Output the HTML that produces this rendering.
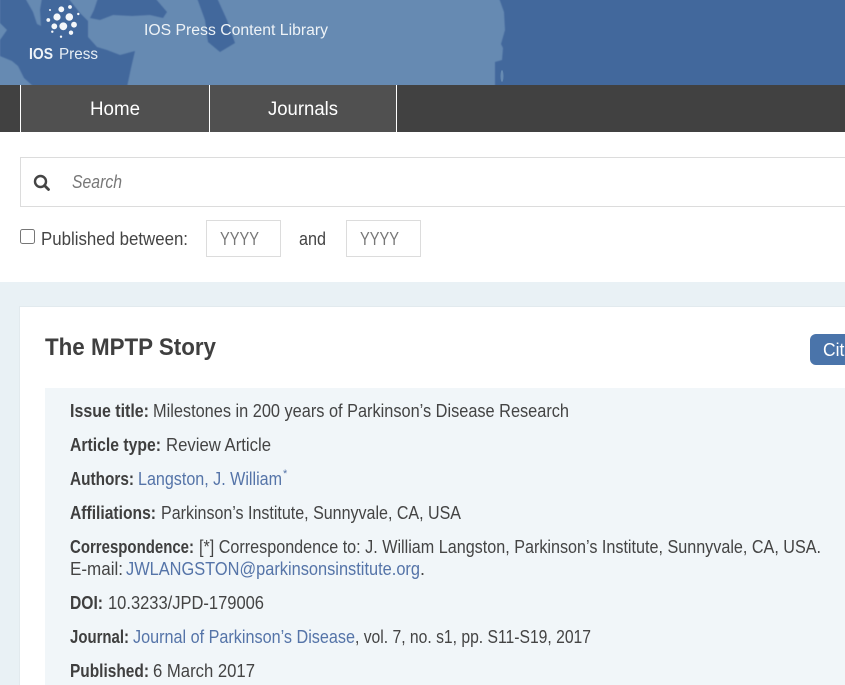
<!DOCTYPE html>
<html lang="en">
<head>
<meta charset="utf-8">
<title>The MPTP Story</title>
<style>
html,body{margin:0;padding:0;width:845px;height:685px;overflow:hidden;background:#fff}
svg{display:block;position:absolute;left:0;top:0}
text{font-family:"Liberation Sans",Arial,sans-serif;font-size:18px;fill:#444}
.b{font-weight:bold;fill:#3f3f3f}
.l{fill:#5574a8}
.cb{position:absolute;left:20px;top:229px;width:15px;height:15px;margin:0}
</style>
</head>
<body>
<svg width="845" height="685" viewBox="0 0 845 685" xmlns="http://www.w3.org/2000/svg">
<defs><filter id="s" x="-5%" y="-5%" width="110%" height="110%"><feGaussianBlur stdDeviation="0.5"/></filter></defs>
<!-- header map -->
<rect width="845" height="85" fill="#668ab2"/>
<g fill="#42689c" filter="url(#s)">
<path d="M0,-2 L25,-2 L33,12 L37,24 L41,26 L40,10 L42,-2 L68,-2 L80,13 L88,21 L88,37 L97,47 L107,50 L120,55 L135,51 L131,68 L127,87 L34,87 L24,78 L18,66 L12,61 L0,56 L0,40 L7,30 L3,26 L0,23 Z"/>
<path d="M98,-2 L155,-2 L167,12 L163,18 L150,15 L132,16 L113,15 L100,20 L90,18 L94,10 Z"/>
<path d="M197,-2 L217,-2 L227,20 L235,43 L220,52 L208,42 L205,20 Z"/>
<path d="M499,-2 L847,-2 L847,87 L495,87 L495,62 L502,60 L503,48 L501,44 L505,30 L504,12 Z"/>
</g>
<ellipse cx="502" cy="76" rx="1.5" ry="6" fill="#668ab2"/>
<!-- logo dots -->
<g fill="#f4f7fa">
<circle cx="61.3" cy="9.3" r="2.9"/><circle cx="70" cy="7" r="1.9"/><circle cx="50" cy="10" r="1"/>
<circle cx="78.3" cy="14" r="1.2"/><circle cx="57" cy="17" r="3.6"/><circle cx="69.3" cy="17" r="3.8"/>
<circle cx="48.3" cy="20" r="1.9"/><circle cx="74" cy="24.7" r="2.9"/><circle cx="63.3" cy="26.3" r="3.9"/>
<circle cx="54.3" cy="26.3" r="2.9"/><circle cx="52.3" cy="31.7" r="1.2"/><circle cx="71" cy="32.7" r="2.2"/>
<circle cx="61" cy="36.7" r="1.2"/>
</g>
<text x="29" y="59" class="b" style="fill:#f0f4f8;font-size:16px" textLength="24" lengthAdjust="spacingAndGlyphs">IOS</text>
<text x="59" y="59" style="fill:#e8eff5;font-size:16px" textLength="39" lengthAdjust="spacingAndGlyphs">Press</text>
<text x="144" y="35" style="fill:#eef3f7;font-size:15.5px" textLength="184" lengthAdjust="spacingAndGlyphs">IOS Press Content Library</text>
<!-- nav -->
<rect y="85" width="845" height="47" fill="#414141"/>
<rect x="20" y="85" width="377" height="47" fill="#505050"/>
<rect x="20" y="85" width="1" height="47" fill="#fff"/>
<rect x="209" y="85" width="1" height="47" fill="#fff"/>
<rect x="396" y="85" width="1" height="47" fill="#fff"/>
<text x="90" y="115" style="fill:#fff;font-size:19px" textLength="50" lengthAdjust="spacingAndGlyphs">Home</text>
<text x="268" y="115" style="fill:#fff;font-size:19px" textLength="70" lengthAdjust="spacingAndGlyphs">Journals</text>
<!-- search -->
<rect x="20.5" y="157.5" width="840" height="49" fill="#fff" stroke="#dcdcdc"/>
<circle cx="40.5" cy="181.5" r="5.5" fill="none" stroke="#444" stroke-width="2.4"/>
<path d="M44.5,185.5 L48.5,189.5" stroke="#444" stroke-width="2.8" stroke-linecap="round"/>
<text x="72" y="188" style="fill:#777;font-style:italic" textLength="50" lengthAdjust="spacingAndGlyphs">Search</text>
<text x="41" y="245" textLength="147" lengthAdjust="spacingAndGlyphs">Published between:</text>
<rect x="206.5" y="220.5" width="74" height="36" fill="#fff" stroke="#dcdcdc"/>
<text x="220" y="245" style="fill:#777" textLength="39" lengthAdjust="spacingAndGlyphs">YYYY</text>
<text x="299" y="245" textLength="27" lengthAdjust="spacingAndGlyphs">and</text>
<rect x="346.5" y="220.5" width="74" height="36" fill="#fff" stroke="#dcdcdc"/>
<text x="360" y="245" style="fill:#777" textLength="39" lengthAdjust="spacingAndGlyphs">YYYY</text>
<!-- main -->
<rect y="282" width="845" height="403" fill="#e9f1f5"/>
<rect x="19" y="306" width="830" height="380" fill="#e2eaee"/>
<rect x="20" y="307" width="830" height="380" fill="#fff"/>
<text x="45" y="355" class="b" style="font-size:24px" textLength="171" lengthAdjust="spacingAndGlyphs">The MPTP Story</text>
<rect x="810" y="334" width="60" height="31" rx="6" fill="#4a74aa"/>
<text x="823" y="356" style="fill:#fff;font-size:18px" textLength="31" lengthAdjust="spacingAndGlyphs">Cite</text>
<rect x="45" y="388" width="810" height="300" fill="#f1f6f9"/>

<text x="70" y="417" class="b" textLength="79" lengthAdjust="spacingAndGlyphs">Issue title:</text>
<text x="153" y="417" textLength="416" lengthAdjust="spacingAndGlyphs">Milestones in 200 years of Parkinson’s Disease Research</text>

<text x="70" y="451" class="b" textLength="91" lengthAdjust="spacingAndGlyphs">Article type:</text>
<text x="166" y="451" textLength="105" lengthAdjust="spacingAndGlyphs">Review Article</text>

<text x="70" y="485" class="b" textLength="64" lengthAdjust="spacingAndGlyphs">Authors:</text>
<text x="138" y="485" class="l" textLength="144" lengthAdjust="spacingAndGlyphs">Langston, J. William</text>
<text x="283" y="477" class="l" style="font-size:11px">*</text>

<text x="70" y="519" class="b" textLength="86" lengthAdjust="spacingAndGlyphs">Affiliations:</text>
<text x="161" y="519" textLength="300" lengthAdjust="spacingAndGlyphs">Parkinson’s Institute, Sunnyvale, CA, USA</text>

<text x="70" y="553" class="b" textLength="124" lengthAdjust="spacingAndGlyphs">Correspondence:</text>
<text x="199" y="553" textLength="622" lengthAdjust="spacingAndGlyphs">[*] Correspondence to: J. William Langston, Parkinson’s Institute, Sunnyvale, CA, USA.</text>
<text x="70" y="575" textLength="53" lengthAdjust="spacingAndGlyphs">E-mail:</text>
<text x="126" y="575" class="l" textLength="294" lengthAdjust="spacingAndGlyphs">JWLANGSTON@parkinsonsinstitute.org</text>
<text x="420" y="575">.</text>

<text x="70" y="609" class="b" textLength="33" lengthAdjust="spacingAndGlyphs">DOI:</text>
<text x="108" y="609" textLength="156" lengthAdjust="spacingAndGlyphs">10.3233/JPD-179006</text>

<text x="70" y="643" class="b" textLength="59" lengthAdjust="spacingAndGlyphs">Journal:</text>
<text x="133" y="643" class="l" textLength="222" lengthAdjust="spacingAndGlyphs">Journal of Parkinson’s Disease</text>
<text x="355" y="643" textLength="236" lengthAdjust="spacingAndGlyphs">, vol. 7, no. s1, pp. S11-S19, 2017</text>

<text x="70" y="677" class="b" textLength="79" lengthAdjust="spacingAndGlyphs">Published:</text>
<text x="153" y="677" textLength="102" lengthAdjust="spacingAndGlyphs">6 March 2017</text>
</svg>
<input class="cb" type="checkbox">
</body>
</html>
